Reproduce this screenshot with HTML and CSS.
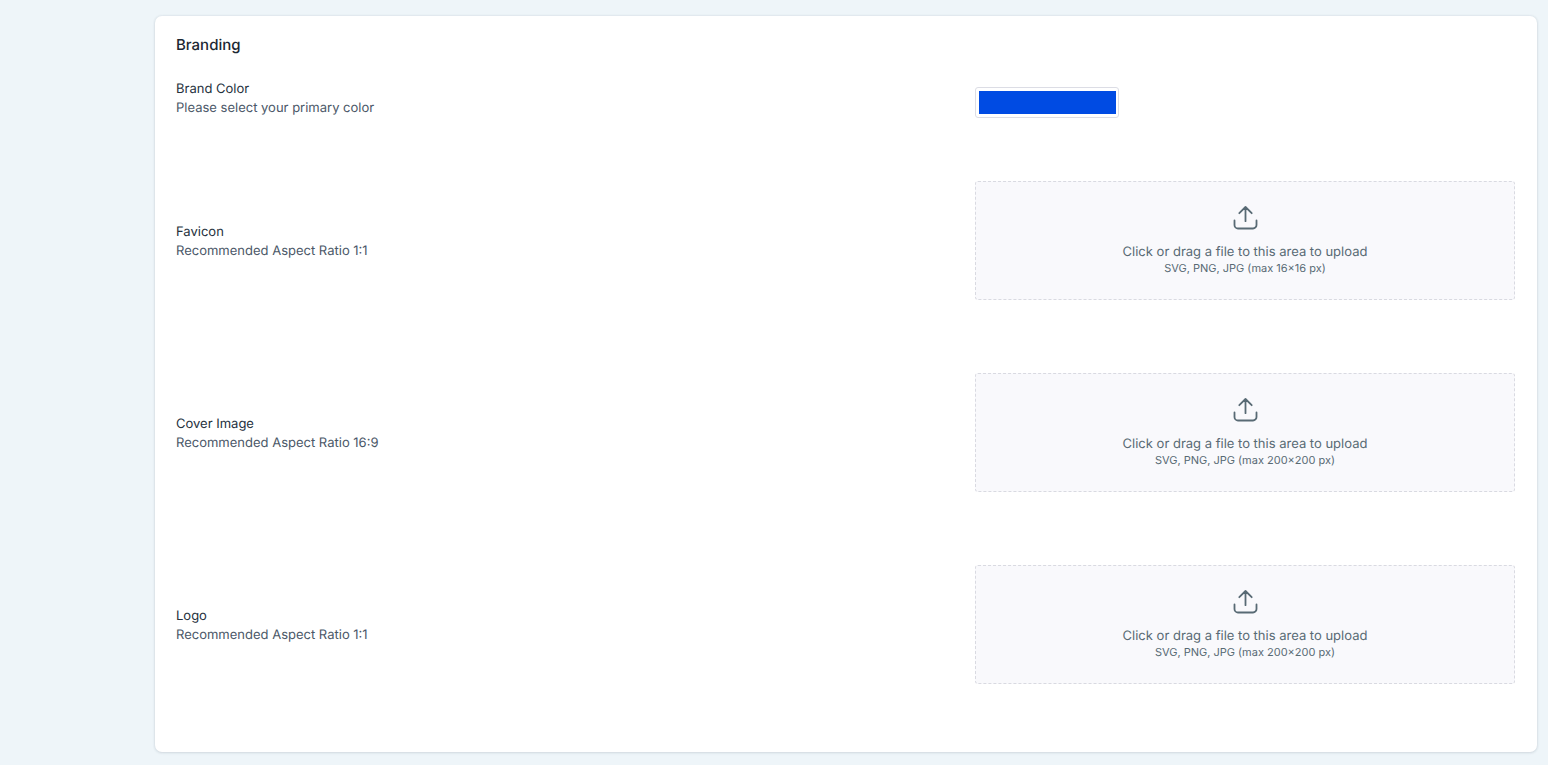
FILE: index.html
```html
<!DOCTYPE html>
<html lang="en">
<head>
  <meta charset="UTF-8" />
  <meta name="viewport" content="width=device-width, initial-scale=1.0"/>
  <title>Branding</title>
  <link rel="stylesheet" href="styles.css">
</head>
<body>
  <!-- Shared upload icon -->
  <svg class="sprite" aria-hidden="true">
    <symbol id="upload" viewBox="0 0 26 26">
      <path d="M13.500 16.200V2.500M7.300 8.200 13.500 2l6.200 6.200M2.500 15.500v4.500a3.500 3.500 0 0 0 3.500 3.500h15a3.500 3.500 0 0 0 3.500-3.500v-4.500"/>
    </symbol>
  </svg>

  <main class="card">
    <h1>Branding</h1>

    <!-- Brand Color -->
    <div class="row row-color">
      <label class="row-label" for="brandColor">
        <span class="row-title">Brand Color</span>
        <span class="row-hint">Please select your primary color</span>
      </label>
      <input type="color" id="brandColor" name="brandColor" value="#004be3" />
    </div>

    <!-- Favicon -->
    <div class="row">
      <div class="row-label">
        <span class="row-title">Favicon</span>
        <span class="row-hint">Recommended Aspect Ratio 1:1</span>
      </div>
      <button type="button" class="upload">
        <svg class="upload-icon" aria-hidden="true"><use href="#upload"/></svg>
        <span class="upload-text">Click or drag a file to this area to upload</span>
        <span class="upload-hint">SVG, PNG, JPG (max 16×16 px)</span>
      </button>
    </div>

    <!-- Cover Image -->
    <div class="row">
      <div class="row-label">
        <span class="row-title">Cover Image</span>
        <span class="row-hint">Recommended Aspect Ratio 16:9</span>
      </div>
      <button type="button" class="upload">
        <svg class="upload-icon" aria-hidden="true"><use href="#upload"/></svg>
        <span class="upload-text">Click or drag a file to this area to upload</span>
        <span class="upload-hint">SVG, PNG, JPG (max 200×200 px)</span>
      </button>
    </div>

    <!-- Logo -->
    <div class="row">
      <div class="row-label">
        <span class="row-title">Logo</span>
        <span class="row-hint">Recommended Aspect Ratio 1:1</span>
      </div>
      <button type="button" class="upload">
        <svg class="upload-icon" aria-hidden="true"><use href="#upload"/></svg>
        <span class="upload-text">Click or drag a file to this area to upload</span>
        <span class="upload-hint">SVG, PNG, JPG (max 200×200 px)</span>
      </button>
    </div>
  </main>
</body>
</html>
```
FILE: styles.css
```css
* {
  box-sizing: border-box;
}

body {
  font-family: Inter, sans-serif;
  font-size: 13px;
  line-height: 19px;
  text-rendering: geometricPrecision;
  margin: 0;
  padding: 16px 11px 12px 155px;
  background-color: #eef5f9;
}

.sprite {
  display: none;
}

.card {
  background-color: #ffffff;
  padding: 18px 22px 32px 21px;
  border-radius: 7px;
  box-shadow: 0 0 2px 1px rgba(44, 62, 80, 0.06), 0 1px 3px rgba(44, 62, 80, 0.1);
}

h1 {
  margin: 0;
  font-size: 15px;
  line-height: 22px;
  font-weight: 500;
  color: #1c2733;
}

.row {
  display: grid;
  grid-template-columns: 1fr 540px;
  align-items: center;
  padding: 37px 0 36px;
}

.row-color {
  align-items: end;
  padding: 22px 0 26px;
}

.row-label {
  display: flex;
  flex-direction: column;
  padding-top: 2px;
}

.row-color .row-label {
  padding: 2px 0 0;
}

.row-title {
  color: #25313d;
}

.row-hint {
  color: #4b5868;
}

input[type="color"] {
  width: 144px;
  height: 31px;
  padding: 3px 2px 3px 3px;
  border: 1px solid #dcdde5;
  border-radius: 3px;
  background: #ffffff;
  cursor: pointer;
}

input[type="color"]::-webkit-color-swatch-wrapper {
  padding: 0;
}

input[type="color"]::-webkit-color-swatch {
  border: none;
  border-radius: 0;
}

.upload {
  display: flex;
  flex-direction: column;
  align-items: center;
  padding: 23px 16px 24px;
  background-color: #f9f9fc;
  border: 1px dashed #d9dae1;
  border-radius: 3px;
  font-family: inherit;
  text-rendering: inherit;
  color: #586a74;
  cursor: pointer;
}

.upload:hover {
  border-color: #004be3;
}

.upload-icon {
  width: 26px;
  height: 26px;
  margin-bottom: 12px;
  fill: none;
  stroke: currentColor;
  stroke-width: 1.8;
  stroke-linecap: round;
  stroke-linejoin: round;
}

.upload-text {
  font-size: 13px;
  line-height: 18px;
}

.upload-hint {
  font-size: 11px;
  line-height: 14px;
}

@media (max-width: 900px) {
  body {
    padding: 16px;
  }

  .row {
    grid-template-columns: 1fr;
    gap: 12px;
  }
}
```
